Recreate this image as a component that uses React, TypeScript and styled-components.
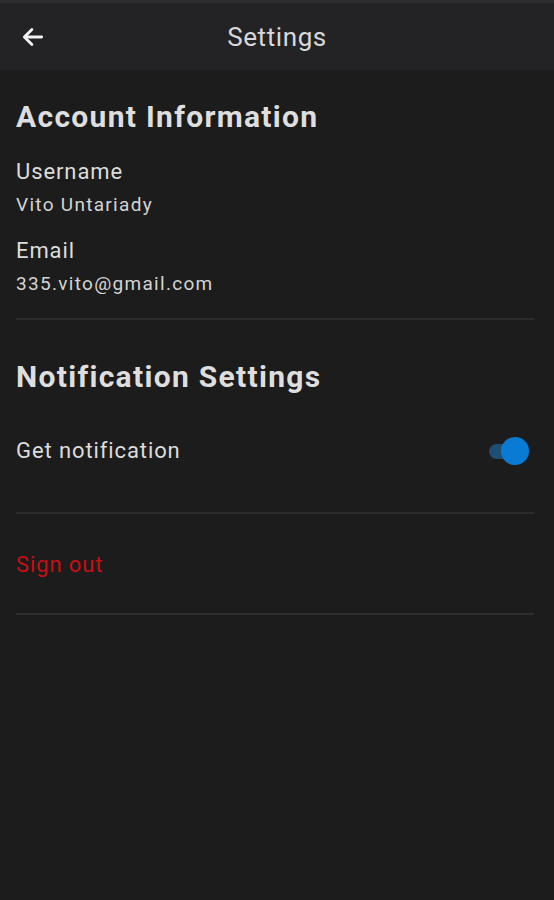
import styled, { createGlobalStyle } from 'styled-components';

const GlobalStyle = createGlobalStyle`
  html, body {
    margin: 0;
    padding: 0;
    background: #1c1c1c;
    font-family: Roboto, "Noto Sans", sans-serif;
  }
`;

const Screen = styled.div`
  width: 554px;
  min-height: 900px;
  background: #1c1c1c;
  color: #e4e4e4;
`;

const TopBar = styled.header`
  height: 70px;
  background: #232325;
  border-top: 3px solid #2e2e30;
  box-sizing: border-box;
  display: flex;
  align-items: center;
  position: relative;
`;

const BackButton = styled.button`
  background: none;
  border: none;
  padding: 0;
  margin-left: 19px;
  width: 28px;
  height: 28px;
  display: flex;
  align-items: center;
  justify-content: center;
  cursor: pointer;
`;

const Title = styled.h1`
  position: absolute;
  left: 0;
  right: 0;
  margin: 0;
  text-align: center;
  font-size: 26px;
  letter-spacing: 0.6px;
  font-weight: 400;
  color: #d8d8d8;
  pointer-events: none;
`;

const Content = styled.main`
  padding: 0 20px 0 16px;
`;

const Section = styled.section<{ $pt: number; $pb: number }>`
  padding-top: ${({ $pt }) => $pt}px;
  padding-bottom: ${({ $pb }) => $pb}px;
  border-bottom: 2px solid #2d2d2d;
`;

const SectionTitle = styled.h2`
  margin: 0;
  font-size: 30px;
  letter-spacing: 1.3px;
  font-weight: 700;
  line-height: 34px;
  color: #dedede;
`;

const Field = styled.div<{ $mt: number }>`
  margin-top: ${({ $mt }) => $mt}px;
`;

const Label = styled.div`
  font-size: 22px;
  letter-spacing: 0.9px;
  line-height: 26px;
  color: #dcdcdc;
`;

const Value = styled.div`
  font-size: 19px;
  letter-spacing: 1.3px;
  line-height: 24px;
  margin-top: 8px;
  color: #d4d4d4;
`;

const Row = styled.div`
  display: flex;
  align-items: center;
  justify-content: space-between;
  margin-top: 43px;
`;

const Toggle = styled.div`
  position: relative;
  width: 40px;
  height: 28px;
  margin-right: 5px;
`;

const Track = styled.div`
  position: absolute;
  left: 0;
  top: 7px;
  width: 36px;
  height: 15px;
  border-radius: 8px;
  background: #1d4e74;
`;

const Thumb = styled.div`
  position: absolute;
  right: 0;
  top: 0;
  width: 28px;
  height: 28px;
  border-radius: 50%;
  background: #0a7bd4;
`;

const SignOut = styled.button`
  background: none;
  border: none;
  padding: 0;
  font-family: inherit;
  font-size: 22px;
  letter-spacing: 0.9px;
  color: #c80f12;
  cursor: pointer;
`;

export default function App() {
  return (
    <Screen>
      <GlobalStyle />
      <TopBar>
        <BackButton aria-label="Back">
          <svg width="26" height="26" viewBox="0 0 24 24" fill="none" stroke="#f2f2f2" strokeWidth="2.6" strokeLinecap="round" strokeLinejoin="round">
            <path d="M20 12H5" />
            <path d="M11 5l-7 7 7 7" />
          </svg>
        </BackButton>
        <Title>Settings</Title>
      </TopBar>
      <Content>
        <Section $pt={30} $pb={22}>
          <SectionTitle>Account Information</SectionTitle>
          <Field $mt={25}>
            <Label>Username</Label>
            <Value>Vito Untariady</Value>
          </Field>
          <Field $mt={21}>
            <Label>Email</Label>
            <Value>335.vito@gmail.com</Value>
          </Field>
        </Section>
        <Section $pt={40} $pb={47}>
          <SectionTitle>Notification Settings</SectionTitle>
          <Row>
            <Label>Get notification</Label>
            <Toggle>
              <Track />
              <Thumb />
            </Toggle>
          </Row>
        </Section>
        <Section $pt={38} $pb={36}>
          <SignOut>Sign out</SignOut>
        </Section>
      </Content>
    </Screen>
  );
}
